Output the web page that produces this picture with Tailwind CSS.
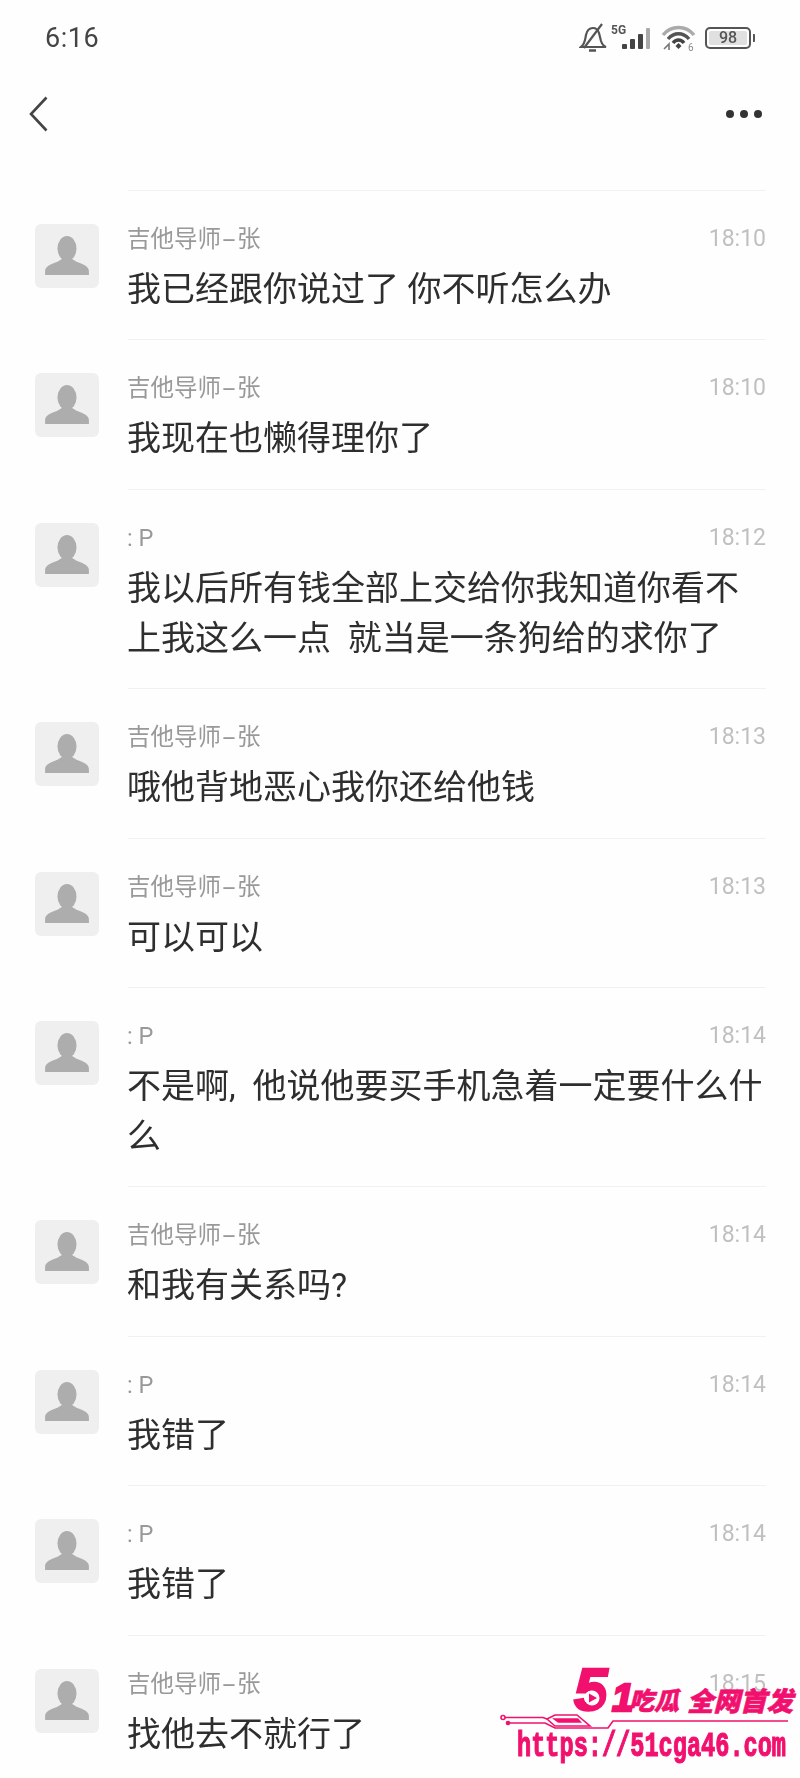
<!DOCTYPE html>
<html lang="zh">
<head>
    <meta charset="UTF-8">
    <meta name="viewport" content="width=device-width, initial-scale=1.0">
    <title>Messages</title>
    <script src="https://cdn.jsdelivr.net/npm/@tailwindcss/browser@4"></script>
</head>
<body class="bg-[#fefefe]">
<div class="relative w-[800px] h-[1778px] overflow-hidden bg-[#fefefe] font-['Roboto','Noto_Sans_CJK_SC',sans-serif]">

    <!-- status bar -->
    <div class="h-[76px] flex items-center justify-between pl-[45px] pr-[45px] text-[#444]">
        <span class="text-[27px] tracking-[0.5px] blur-[0.4px]">6:16</span>
        <div class="flex items-center blur-[0.5px]">
            <svg width="28" height="30" viewBox="0 0 28 30" fill="none" stroke="#555" stroke-width="2.2">
                <path d="M2 24 C6 21 6 17 7 12 C8 7 11 5 14 5 C17 5 19 7 20 10 L22 18 C23 21 24 23 27 24 Z"/>
                <path d="M10 27.5 H17" stroke-width="2.5"/>
                <path d="M5 25 L23 1"/>
            </svg>
            <div class="relative w-[44px] h-[30px] ml-[4px]">
                <span class="absolute left-[0px] top-[0px] text-[12px] leading-[14px] font-bold text-[#555]">5G</span>
                <div class="absolute left-[11px] bottom-[4px] flex items-end gap-[3px]">
                    <div class="w-[5px] h-[5px] rounded-[1px] bg-[#444]"></div>
                    <div class="w-[5px] h-[10px] rounded-[1px] bg-[#444]"></div>
                    <div class="w-[5px] h-[15px] rounded-[1px] bg-[#444]"></div>
                    <div class="w-[4px] h-[21px] rounded-[1px] bg-[#aaa]"></div>
                </div>
            </div>
            <svg class="ml-[6px]" width="36" height="28" viewBox="0 0 36 28" fill="none" stroke-width="3.4">
                <path d="M2 11 C10 1 25 1 33 11" stroke="#aaa"/>
                <path d="M7 15 C13 8 22 8 28 15" stroke="#555"/>
                <path d="M12 19 C15 15 20 15 23 19" stroke="#444"/>
                <path d="M14.5 22 L17.5 19 L20.5 22 L17.5 25 Z" fill="#444" stroke="none"/>
                <path d="M3 25 L8 20 V26" stroke="#777" stroke-width="1.6"/>
                <text x="27" y="27" font-size="10" font-family="Roboto" fill="#888" stroke="none">6</text>
            </svg>
            <div class="ml-[8px] flex items-center">
                <div class="w-[46px] h-[22px] rounded-[5px] border-2 border-[#555] p-[2px] flex">
                    <div class="flex-1 bg-[#e0e0e0] rounded-[2px] flex items-center justify-center text-[16px] leading-none font-medium text-[#555]">98</div>
                </div>
                <div class="w-[2px] h-[8px] ml-[2px] bg-[#555] rounded-r-[1px]"></div>
            </div>
        </div>
    </div>

    <!-- nav -->
    <div class="h-[114px] pt-[20px] flex items-start justify-between pl-[28px] pr-[38px]">
        <svg width="22" height="36" viewBox="0 0 22 36" fill="none" stroke="#444" stroke-width="2.6">
            <path d="M18.5 1.5 L3 18 L18.5 34.5"/>
        </svg>
        <div class="flex gap-[6px] mt-[14px]">
            <div class="w-[8px] h-[8px] rounded-full bg-[#333]"></div>
            <div class="w-[8px] h-[8px] rounded-full bg-[#333]"></div>
            <div class="w-[8px] h-[8px] rounded-full bg-[#333]"></div>
        </div>
    </div>

    <!-- list -->
    <div id="list" class="pl-[35px] pr-[34px] blur-[0.4px]">

        <div class="flex gap-[29px]">
            <div class="w-[64px] h-[64px] mt-[34px] shrink-0 rounded-[6px] bg-[#efefef] flex items-center justify-center">
                <svg width="46" height="40" viewBox="0 0 48 42" fill="#adadad"><ellipse cx="24" cy="13" rx="10" ry="13"/><path d="M1 41 V37 C1 32 6 30 14 27 L19 24 H29 L34 27 C42 30 47 32 47 37 V41 Z"/></svg>
            </div>
            <div class="flex-1 border-t border-[#f1f1f1] pt-[32px] pb-[25.4px]">
                <div class="flex justify-between -ml-px text-[23.5px] leading-[32px] text-[#999]"><span>吉他导师<span class="inline-block w-[16px] text-center scale-x-[2]">-</span>张</span><span class="text-[#c0c0c0] text-[23px]">18:10</span></div>
                <div class="mt-[9px] -ml-px text-[34px] leading-[50px] text-[#2e2e2e]">我已经跟你说过了 你不听怎么办</div>
            </div>
        </div>

        <div class="flex gap-[29px]">
            <div class="w-[64px] h-[64px] mt-[34px] shrink-0 rounded-[6px] bg-[#efefef] flex items-center justify-center">
                <svg width="46" height="40" viewBox="0 0 48 42" fill="#adadad"><ellipse cx="24" cy="13" rx="10" ry="13"/><path d="M1 41 V37 C1 32 6 30 14 27 L19 24 H29 L34 27 C42 30 47 32 47 37 V41 Z"/></svg>
            </div>
            <div class="flex-1 border-t border-[#f1f1f1] pt-[32px] pb-[25.4px]">
                <div class="flex justify-between -ml-px text-[23.5px] leading-[32px] text-[#999]"><span>吉他导师<span class="inline-block w-[16px] text-center scale-x-[2]">-</span>张</span><span class="text-[#c0c0c0] text-[23px]">18:10</span></div>
                <div class="mt-[9px] -ml-px text-[34px] leading-[50px] text-[#2e2e2e]">我现在也懒得理你了</div>
            </div>
        </div>

        <div class="flex gap-[29px]">
            <div class="w-[64px] h-[64px] mt-[34px] shrink-0 rounded-[6px] bg-[#efefef] flex items-center justify-center">
                <svg width="46" height="40" viewBox="0 0 48 42" fill="#adadad"><ellipse cx="24" cy="13" rx="10" ry="13"/><path d="M1 41 V37 C1 32 6 30 14 27 L19 24 H29 L34 27 C42 30 47 32 47 37 V41 Z"/></svg>
            </div>
            <div class="flex-1 border-t border-[#f1f1f1] pt-[32px] pb-[25.4px]">
                <div class="flex justify-between -ml-px text-[23.5px] leading-[32px] text-[#999]"><span>: P</span><span class="text-[#c0c0c0] text-[23px]">18:12</span></div>
                <div class="mt-[9px] -ml-px text-[34px] leading-[50px] text-[#2e2e2e] whitespace-pre">我以后所有钱全部上交给你我知道你看不
上我这么一点  就当是一条狗给的求你了</div>
            </div>
        </div>

        <div class="flex gap-[29px]">
            <div class="w-[64px] h-[64px] mt-[34px] shrink-0 rounded-[6px] bg-[#efefef] flex items-center justify-center">
                <svg width="46" height="40" viewBox="0 0 48 42" fill="#adadad"><ellipse cx="24" cy="13" rx="10" ry="13"/><path d="M1 41 V37 C1 32 6 30 14 27 L19 24 H29 L34 27 C42 30 47 32 47 37 V41 Z"/></svg>
            </div>
            <div class="flex-1 border-t border-[#f1f1f1] pt-[32px] pb-[25.4px]">
                <div class="flex justify-between -ml-px text-[23.5px] leading-[32px] text-[#999]"><span>吉他导师<span class="inline-block w-[16px] text-center scale-x-[2]">-</span>张</span><span class="text-[#c0c0c0] text-[23px]">18:13</span></div>
                <div class="mt-[9px] -ml-px text-[34px] leading-[50px] text-[#2e2e2e]">哦他背地恶心我你还给他钱</div>
            </div>
        </div>

        <div class="flex gap-[29px]">
            <div class="w-[64px] h-[64px] mt-[34px] shrink-0 rounded-[6px] bg-[#efefef] flex items-center justify-center">
                <svg width="46" height="40" viewBox="0 0 48 42" fill="#adadad"><ellipse cx="24" cy="13" rx="10" ry="13"/><path d="M1 41 V37 C1 32 6 30 14 27 L19 24 H29 L34 27 C42 30 47 32 47 37 V41 Z"/></svg>
            </div>
            <div class="flex-1 border-t border-[#f1f1f1] pt-[32px] pb-[25.4px]">
                <div class="flex justify-between -ml-px text-[23.5px] leading-[32px] text-[#999]"><span>吉他导师<span class="inline-block w-[16px] text-center scale-x-[2]">-</span>张</span><span class="text-[#c0c0c0] text-[23px]">18:13</span></div>
                <div class="mt-[9px] -ml-px text-[34px] leading-[50px] text-[#2e2e2e]">可以可以</div>
            </div>
        </div>

        <div class="flex gap-[29px]">
            <div class="w-[64px] h-[64px] mt-[34px] shrink-0 rounded-[6px] bg-[#efefef] flex items-center justify-center">
                <svg width="46" height="40" viewBox="0 0 48 42" fill="#adadad"><ellipse cx="24" cy="13" rx="10" ry="13"/><path d="M1 41 V37 C1 32 6 30 14 27 L19 24 H29 L34 27 C42 30 47 32 47 37 V41 Z"/></svg>
            </div>
            <div class="flex-1 border-t border-[#f1f1f1] pt-[32px] pb-[25.4px]">
                <div class="flex justify-between -ml-px text-[23.5px] leading-[32px] text-[#999]"><span>: P</span><span class="text-[#c0c0c0] text-[23px]">18:14</span></div>
                <div class="mt-[9px] -ml-px text-[34px] leading-[50px] text-[#2e2e2e] whitespace-pre">不是啊,  他说他要买手机急着一定要什么什
么</div>
            </div>
        </div>

        <div class="flex gap-[29px]">
            <div class="w-[64px] h-[64px] mt-[34px] shrink-0 rounded-[6px] bg-[#efefef] flex items-center justify-center">
                <svg width="46" height="40" viewBox="0 0 48 42" fill="#adadad"><ellipse cx="24" cy="13" rx="10" ry="13"/><path d="M1 41 V37 C1 32 6 30 14 27 L19 24 H29 L34 27 C42 30 47 32 47 37 V41 Z"/></svg>
            </div>
            <div class="flex-1 border-t border-[#f1f1f1] pt-[32px] pb-[25.4px]">
                <div class="flex justify-between -ml-px text-[23.5px] leading-[32px] text-[#999]"><span>吉他导师<span class="inline-block w-[16px] text-center scale-x-[2]">-</span>张</span><span class="text-[#c0c0c0] text-[23px]">18:14</span></div>
                <div class="mt-[9px] -ml-px text-[34px] leading-[50px] text-[#2e2e2e]">和我有关系吗?</div>
            </div>
        </div>

        <div class="flex gap-[29px]">
            <div class="w-[64px] h-[64px] mt-[34px] shrink-0 rounded-[6px] bg-[#efefef] flex items-center justify-center">
                <svg width="46" height="40" viewBox="0 0 48 42" fill="#adadad"><ellipse cx="24" cy="13" rx="10" ry="13"/><path d="M1 41 V37 C1 32 6 30 14 27 L19 24 H29 L34 27 C42 30 47 32 47 37 V41 Z"/></svg>
            </div>
            <div class="flex-1 border-t border-[#f1f1f1] pt-[32px] pb-[25.4px]">
                <div class="flex justify-between -ml-px text-[23.5px] leading-[32px] text-[#999]"><span>: P</span><span class="text-[#c0c0c0] text-[23px]">18:14</span></div>
                <div class="mt-[9px] -ml-px text-[34px] leading-[50px] text-[#2e2e2e]">我错了</div>
            </div>
        </div>

        <div class="flex gap-[29px]">
            <div class="w-[64px] h-[64px] mt-[34px] shrink-0 rounded-[6px] bg-[#efefef] flex items-center justify-center">
                <svg width="46" height="40" viewBox="0 0 48 42" fill="#adadad"><ellipse cx="24" cy="13" rx="10" ry="13"/><path d="M1 41 V37 C1 32 6 30 14 27 L19 24 H29 L34 27 C42 30 47 32 47 37 V41 Z"/></svg>
            </div>
            <div class="flex-1 border-t border-[#f1f1f1] pt-[32px] pb-[25.4px]">
                <div class="flex justify-between -ml-px text-[23.5px] leading-[32px] text-[#999]"><span>: P</span><span class="text-[#c0c0c0] text-[23px]">18:14</span></div>
                <div class="mt-[9px] -ml-px text-[34px] leading-[50px] text-[#2e2e2e]">我错了</div>
            </div>
        </div>

        <div class="flex gap-[29px]">
            <div class="w-[64px] h-[64px] mt-[34px] shrink-0 rounded-[6px] bg-[#efefef] flex items-center justify-center">
                <svg width="46" height="40" viewBox="0 0 48 42" fill="#adadad"><ellipse cx="24" cy="13" rx="10" ry="13"/><path d="M1 41 V37 C1 32 6 30 14 27 L19 24 H29 L34 27 C42 30 47 32 47 37 V41 Z"/></svg>
            </div>
            <div class="flex-1 border-t border-[#f1f1f1] pt-[32px] pb-[25.4px]">
                <div class="flex justify-between -ml-px text-[23.5px] leading-[32px] text-[#999]"><span>吉他导师<span class="inline-block w-[16px] text-center scale-x-[2]">-</span>张</span><span class="text-[#c0c0c0] text-[23px]">18:15</span></div>
                <div class="mt-[9px] -ml-px text-[34px] leading-[50px] text-[#2e2e2e]">找他去不就行了</div>
            </div>
        </div>
    </div>

    <!-- watermark -->
    <div class="absolute left-[490px] top-[1660px] w-[310px] h-[118px] text-[#f2106e]">
        <div class="absolute left-[84px] top-[0px] text-[60px] leading-[60px] font-['Liberation_Sans'] font-bold italic [-webkit-text-stroke:2.5px_#f2106e]">5</div>
        <svg class="absolute left-[93px] top-[29px]" width="18" height="18" viewBox="0 0 18 18"><circle cx="9" cy="9" r="7.5" fill="#fefefe"/><path d="M6 4.5 L14 9 L6 13.5 Z" fill="#f2106e"/></svg>
        <div class="absolute left-[122px] top-[18px] text-[39px] leading-[40px] font-['Liberation_Sans'] font-bold italic [-webkit-text-stroke:2.5px_#f2106e]">1</div>
        <div class="absolute left-[139px] top-[28px] text-[25px] leading-[28px] font-black italic [-webkit-text-stroke:0.6px_#f2106e] whitespace-nowrap">吃瓜</div>
        <div class="absolute left-[197px] top-[28px] text-[26.5px] leading-[28px] font-black italic [-webkit-text-stroke:0.6px_#f2106e] whitespace-nowrap">全网首发</div>
        <svg class="absolute left-0 top-[50px]" width="310" height="24" viewBox="0 0 310 24" fill="none" stroke="#f2106e" stroke-width="1.6">
            <circle cx="13" cy="7.5" r="2"/>
            <path d="M15 7.5 H53 L57 9"/>
            <path d="M57 9 L65 5 H87 L100 16 H65 Z"/>
            <path d="M18 13 H55 L65 18 H118 L123 11 H298"/>
            <path d="M62 8.3 H88 L92 12.7 H68 Z" fill="#f2106e" stroke="none"/>
            <circle cx="18" cy="13" r="1.5" fill="#f2106e"/>
        </svg>
        <div class="absolute left-[27px] top-[70px] w-[270px] font-['Liberation_Mono'] font-bold text-[23.6px] leading-[34px] scale-y-[1.45] origin-center whitespace-nowrap [-webkit-text-stroke:0.8px_#f2106e]">https://51cga46.com</div>
    </div>
</div>
</body>
</html>
